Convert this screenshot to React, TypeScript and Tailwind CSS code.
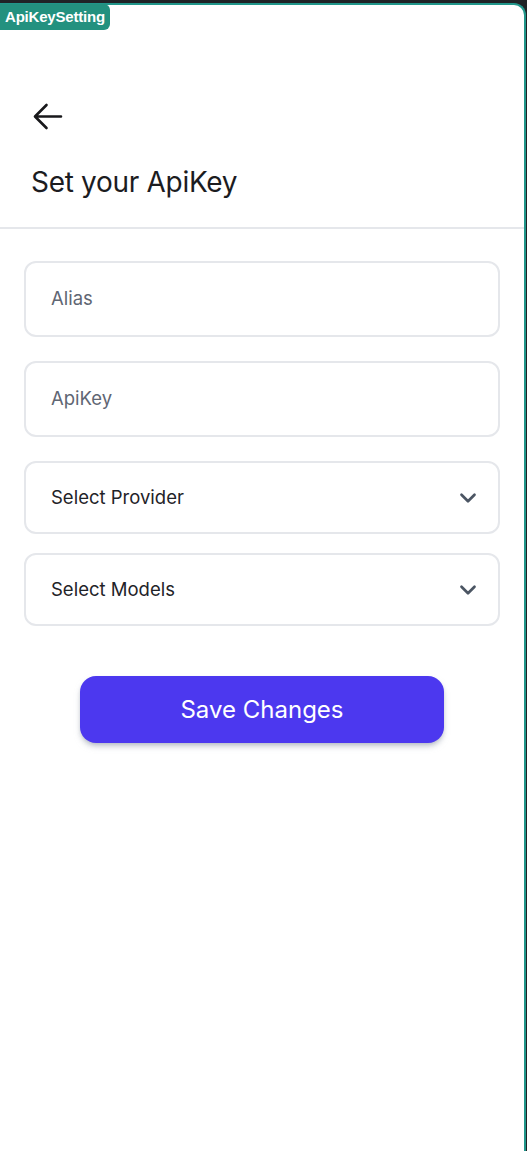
import { ChevronDown } from "lucide-react"

const fields = ["Alias", "ApiKey"]
const selects = ["Select Provider", "Select Models"]

const App = () => {
    return (
        <div className="w-[527px] h-[1151px] bg-[#202326] pt-[3px] pr-[1px] overflow-hidden">
            <div className="relative h-[1160px] bg-white border-t-2 border-r-2 border-[#21968a] rounded-tr-xl font-['Inter',sans-serif]">
                <div className="absolute -top-[1px] left-0 h-[26px] px-[5px] flex items-center bg-[#23917f] text-white text-[15px] font-semibold rounded-r-md font-['Liberation_Sans',sans-serif] tracking-[-0.2px]">
                    ApiKeySetting
                </div>

                <div className="pt-[97px] px-[33px] pb-[27px]">
                    <svg width="30" height="30" viewBox="0 0 30 30">
                        <path d="M28 14.5H2.5M13.5 3L2 14.5L13.5 26" fill="none" stroke="#18181b" strokeWidth="2.6" strokeLinecap="round" strokeLinejoin="round" />
                    </svg>
                    <h1 className="-ml-[2px] mt-[32px] text-[28px] leading-[36px] text-[#1c1c1f] tracking-[-0.3px]">Set your ApiKey</h1>
                </div>
                <div className="h-[2px] bg-[#e5e7eb]" />

                <div className="px-6 pt-[32px] flex flex-col">
                    <div className="flex flex-col gap-6">
                        {fields.map(f => (
                            <div key={f} className="h-[76px] border-2 border-[#e5e7eb] rounded-xl flex items-center px-[25px] text-[18.5px] text-[#5f6673]">
                                {f}
                            </div>
                        ))}
                    </div>
                    <div className="flex flex-col gap-[19px] mt-6">
                        {selects.map(s => (
                            <div key={s} className="h-[73px] border-2 border-[#e5e7eb] rounded-xl flex items-center justify-between pl-[25px] pr-[17px] text-[18.5px] text-[#1f2328]">
                                <span>{s}</span>
                                <ChevronDown size={26} strokeWidth={2.5} className="text-[#4b5563]" />
                            </div>
                        ))}
                    </div>
                    <button className="mt-[50px] mx-auto w-[364px] h-[67px] rounded-2xl bg-[#4c38ef] text-white text-[24px] shadow-md shadow-gray-400/60">
                        Save Changes
                    </button>
                </div>
            </div>
        </div>
    )
}

export default App
